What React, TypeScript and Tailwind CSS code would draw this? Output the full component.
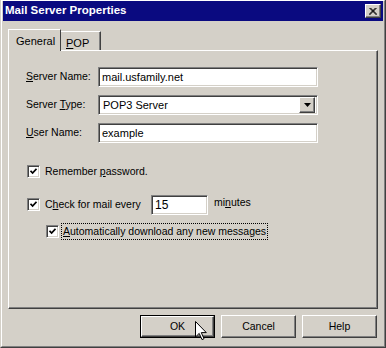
import type { ReactNode } from "react";

const raised =
  "border border-t-white border-l-white border-r-[#404040] border-b-[#404040] shadow-[inset_-1px_-1px_0_#808080]";
const sunken =
  "border border-t-[#808080] border-l-[#808080] border-r-white border-b-white shadow-[inset_1px_1px_0_#404040,inset_-1px_-1px_0_#d4d0c8]";

function Check() {
  return (
    <div className={`flex h-[13px] w-[13px] shrink-0 items-center justify-center bg-white ${sunken}`}>
      <svg width="7" height="7" viewBox="0 0 7 7">
        <path d="M0.5 2.8 L2.6 5 L6.5 0.8" fill="none" stroke="#000" strokeWidth="1.7" />
      </svg>
    </div>
  );
}

function Field({ label, children }: { label: ReactNode; children: ReactNode }) {
  return (
    <div className="flex h-[20px] items-center">
      <div className="w-[72px]">{label}</div>
      {children}
    </div>
  );
}

function Button({ label, isDefault }: { label: string; isDefault?: boolean }) {
  if (isDefault) {
    return (
      <div className="h-[23px] w-[75px] border border-black">
        <div className={`flex h-full items-center justify-center ${raised}`}>{label}</div>
      </div>
    );
  }
  return <div className={`flex h-[23px] w-[75px] items-center justify-center ${raised}`}>{label}</div>;
}

export default function App() {
  return (
    <div className="relative h-[348px] w-[386px] border-b border-l border-r border-l-[#d4d0c8] border-r-[#404040] border-b-[#404040] bg-[#d4d0c8] font-['Liberation_Sans',Arial,sans-serif] text-[10.5px] text-black">
      <div className="flex h-full flex-col border-l border-t border-l-white border-t-white border-r border-b border-r-[#808080] border-b-[#808080] px-px">
        <div className="flex h-[20px] items-center justify-between bg-[#0a0a80] pl-[2px] pr-[2px]">
          <span className="text-[11.5px] font-bold text-white">Mail Server Properties</span>
          <div className={`flex h-[14px] w-[16px] items-center justify-center bg-[#d4d0c8] ${raised}`}>
            <svg width="8" height="7" viewBox="0 0 8 7">
              <path d="M0.5 0 L7.5 7 M1.5 0 L8 6.5 M7.5 0 L0.5 7 M6.5 0 L0 6.5" stroke="#000" strokeWidth="1" />
            </svg>
          </div>
        </div>

        <div className="flex flex-1 flex-col pl-[5px] pr-[5px] pt-[8px]">
          <div className="flex items-end">
            <div className="relative z-10 -mb-px flex h-[22px] w-[53px] items-start border-l border-t border-r border-l-white border-t-white border-r-[#404040] bg-[#d4d0c8] pl-[7px] pt-[3px] text-[11px]">
              General
            </div>
            <div className="flex h-[19px] w-[40px] items-start border-t border-r border-t-white border-r-[#404040] pl-[5px] pt-[3px] text-[11px] shadow-[inset_-1px_0_0_#808080]">
              <span className="underline">P</span>OP
            </div>
          </div>
          <div className={`flex h-[259px] flex-col pl-[17px] pt-[16px] ${raised}`}>
            <div className="flex flex-col gap-[8px]">
              <Field
                label={
                  <span>
                    <span className="underline">S</span>erver Name:
                  </span>
                }
              >
                <div className={`flex h-[20px] w-[220px] items-center bg-white pl-[3px] text-[11px] ${sunken}`}>mail.usfamily.net</div>
              </Field>
              <Field
                label={
                  <span>
                    Server <span className="underline">T</span>ype:
                  </span>
                }
              >
                <div className={`flex h-[20px] w-[220px] items-center justify-between bg-white p-[2px] pl-[4px] text-[11px] ${sunken}`}>
                  <span>POP3 Server</span>
                  <div className={`flex h-[16px] w-[16px] items-center justify-center bg-[#d4d0c8] ${raised}`}>
                    <svg width="7" height="4" viewBox="0 0 7 4">
                      <path d="M0 0 H7 L3.5 4 Z" fill="#000" />
                    </svg>
                  </div>
                </div>
              </Field>
              <Field
                label={
                  <span>
                    <span className="underline">U</span>ser Name:
                  </span>
                }
              >
                <div className={`flex h-[20px] w-[220px] items-center bg-white pl-[3px] text-[11px] ${sunken}`}>example</div>
              </Field>
            </div>

            <div className="mt-[21px] flex items-center gap-[5px] pl-px">
              <Check />
              <span>
                Remember <span className="underline">p</span>assword.
              </span>
            </div>

            <div className="mt-[15px] flex h-[20px] items-center pl-px">
              <Check />
              <span className="ml-[5px] w-[106px]">
                C<span className="underline">h</span>eck for mail every
              </span>
              <div className={`flex h-[20px] w-[57px] items-center bg-white pl-[3px] text-[12px] ${sunken}`}>15</div>
              <span className="ml-[6px] -mt-[3px]">
                mi<span className="underline">n</span>utes
              </span>
            </div>

            <div className="mt-[8px] flex items-center pl-[20px]">
              <Check />
              <span className="ml-[2px] border border-dotted border-black px-px py-px leading-[13px]">
                <span className="underline">A</span>utomatically download any new messages
              </span>
            </div>
          </div>

          <div className="mt-[6px] flex justify-end gap-[6px] pr-px">
            <Button label="OK" isDefault />
            <Button label="Cancel" />
            <Button label="Help" />
          </div>
        </div>
      </div>

      <svg className="absolute left-[194px] top-[321px]" width="12" height="20" viewBox="0 0 12 20">
        <path d="M0.5 0.5 V16 L4.2 12.4 L7 18.6 L9 17.7 L6.3 11.6 H11.3 Z" fill="#fff" stroke="#000" strokeWidth="1" />
      </svg>
    </div>
  );
}
